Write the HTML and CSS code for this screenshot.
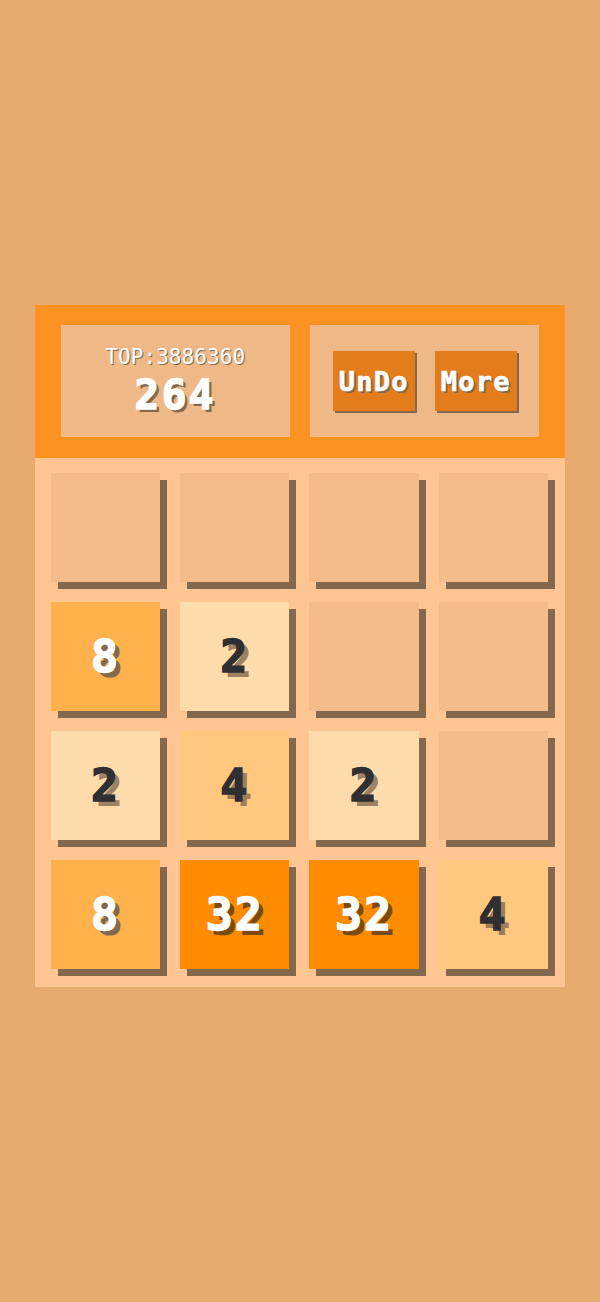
FILE: index.html
```html
<!DOCTYPE html>
<html lang="en">
<head>
    <meta charset="UTF-8">
    <meta name="viewport" content="width=device-width, initial-scale=1.0">
    <title>2048</title>
    <link rel="stylesheet" href="styles.css">
</head>
<body>
    <div class="game">
        <div class="header">
            <div class="panel score-panel">
                <div class="top-score">TOP:3886360</div>
                <div class="score">264</div>
            </div>
            <div class="panel button-panel">
                <button class="game-button">UnDo</button>
                <button class="game-button">More</button>
            </div>
        </div>
        <div class="board">
            <div class="tile"></div>
            <div class="tile"></div>
            <div class="tile"></div>
            <div class="tile"></div>

            <div class="tile tile-8">8</div>
            <div class="tile tile-2">2</div>
            <div class="tile"></div>
            <div class="tile"></div>

            <div class="tile tile-2">2</div>
            <div class="tile tile-4">4</div>
            <div class="tile tile-2">2</div>
            <div class="tile"></div>

            <div class="tile tile-8">8</div>
            <div class="tile tile-32">32</div>
            <div class="tile tile-32">32</div>
            <div class="tile tile-4">4</div>
        </div>
    </div>
</body>
</html>
```

FILE: styles.css
```css
body {
    margin: 0;
    height: 1302px;
    box-sizing: border-box;
    padding: 305px 35px 0;
    overflow: hidden;
    background-color: #e8ab6f;
    font-family: "DejaVu Sans Mono", monospace;
    font-weight: bold;
}
.game {
    width: 530px;
}
.header {
    display: flex;
    gap: 20px;
    height: 153px;
    box-sizing: border-box;
    padding: 20px 26px 21px;
    background-color: #fc9222;
}
.panel {
    flex: 1;
    background-color: #efb987;
}
.score-panel {
    display: flex;
    flex-direction: column;
    align-items: center;
    padding-top: 20px;
    padding-right: 0;
    color: #fff;
}
.top-score {
    font-size: 21px;
    line-height: 24px;
    font-weight: normal;
    letter-spacing: 0.1px;
    text-shadow: 1px 1px 0 #83684d;
}
.score {
    margin-top: 6px;
    font-size: 41px;
    line-height: 40px;
    letter-spacing: 2.5px;
    -webkit-text-stroke: 1.5px #fff;
    text-shadow: 3px 3px 0 #83684d;
}
.button-panel {
    display: flex;
    justify-content: center;
    align-items: center;
    gap: 20px;
    padding-left: 1px;
}
.game-button {
    width: 82px;
    height: 60px;
    padding: 0;
    border: none;
    background-color: #e37d1b;
    box-shadow: 2px 2px 0 #83684d;
    color: #fff;
    font-family: inherit;
    font-weight: bold;
    font-size: 27px;
    letter-spacing: 1.2px;
    -webkit-text-stroke: 0.6px #fff;
    text-shadow: 2px 2px 0 #83684d;
}
.board {
    display: grid;
    grid-template-columns: repeat(4, 109.2px);
    grid-auto-rows: 109px;
    gap: 20px;
    padding: 15px 0 18px 16px;
    background-color: #ffc593;
}
.tile {
    display: flex;
    justify-content: center;
    align-items: center;
    background-color: #f3bc88;
    box-shadow: 7px 7px 0 #83684d;
    font-size: 45px;
    letter-spacing: 2px;
}
.tile-2 {
    background-color: #ffdcac;
    color: #2f2f33;
    -webkit-text-stroke: 1.5px #2f2f33;
    text-shadow: 5px 5px 0 rgba(131, 104, 77, 0.8);
}
.tile-4 {
    background-color: #ffc87e;
    color: #2f2f33;
    -webkit-text-stroke: 1.5px #2f2f33;
    text-shadow: 5px 5px 0 rgba(131, 104, 77, 0.8);
}
.tile-8 {
    background-color: #ffb24c;
    color: #fff;
    -webkit-text-stroke: 1.5px #fff;
    text-shadow: 5px 5px 0 #83684d;
}
.tile-32 {
    background-color: #ff8c00;
    color: #fff;
    -webkit-text-stroke: 1.5px #fff;
    text-shadow: 5px 5px 0 #7a4a10;
}
```
